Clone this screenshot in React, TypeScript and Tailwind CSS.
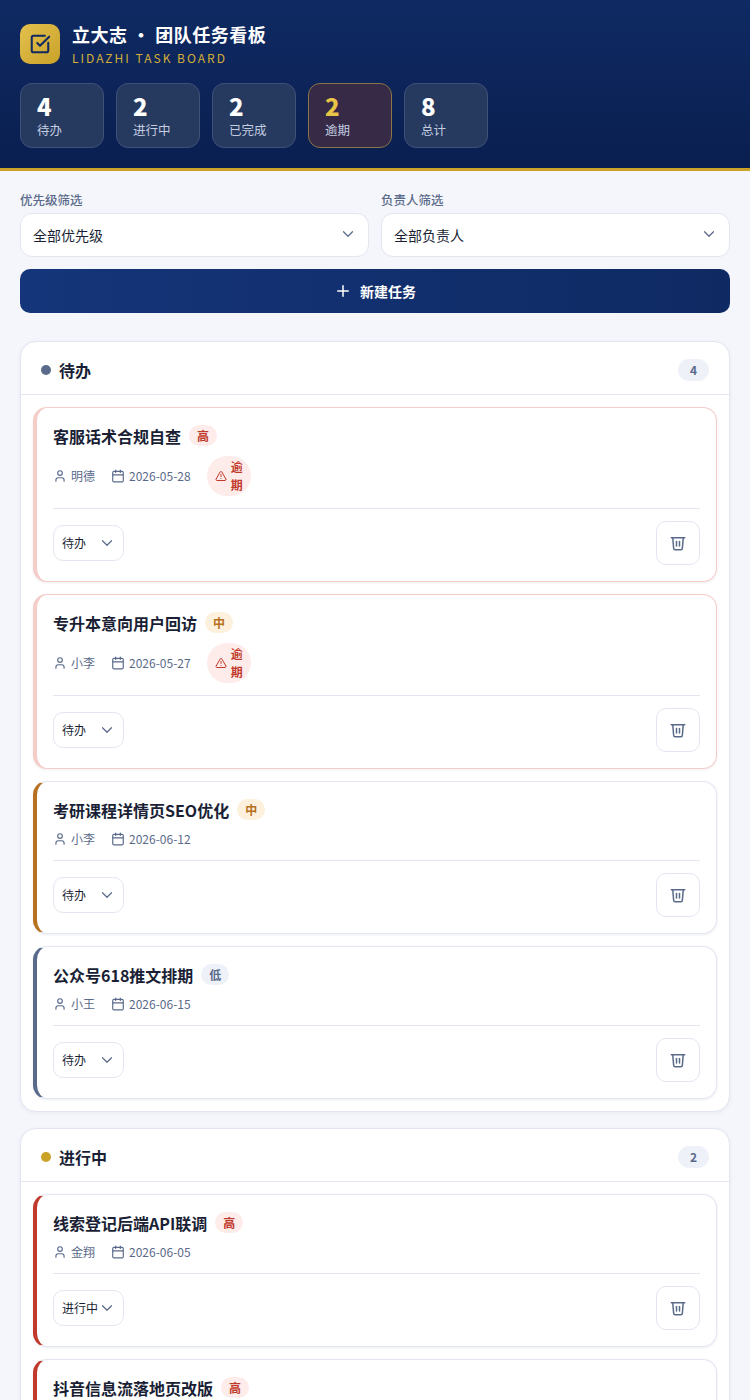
import React from "react";
import {
  Calendar,
  ChevronDown,
  Plus,
  SquareCheckBig,
  TriangleAlert,
  User,
} from "lucide-react";

type Priority = "高" | "中" | "低";

interface Task {
  title: string;
  priority: Priority;
  owner: string;
  date: string;
  overdue?: boolean;
  status: string;
}

const todoTasks: Task[] = [
  { title: "客服话术合规自查", priority: "高", owner: "明德", date: "2026-05-28", overdue: true, status: "待办" },
  { title: "专升本意向用户回访", priority: "中", owner: "小李", date: "2026-05-27", overdue: true, status: "待办" },
  { title: "考研课程详情页SEO优化", priority: "中", owner: "小李", date: "2026-06-12", status: "待办" },
  { title: "公众号618推文排期", priority: "低", owner: "小王", date: "2026-06-15", status: "待办" },
];

const doingTasks: Task[] = [
  { title: "线索登记后端API联调", priority: "高", owner: "金翔", date: "2026-06-05", status: "进行中" },
  { title: "抖音信息流落地页改版", priority: "高", owner: "小王", date: "2026-06-08", status: "进行中" },
];

const stats = [
  { value: 4, label: "待办" },
  { value: 2, label: "进行中" },
  { value: 2, label: "已完成" },
  { value: 2, label: "逾期", alert: true },
  { value: 8, label: "总计" },
];

// Trash can without handle, as in the delete button
const TrashIcon = () => (
  <svg
    width="18"
    height="18"
    viewBox="0 0 24 24"
    fill="none"
    stroke="currentColor"
    strokeWidth="2"
    strokeLinecap="round"
    strokeLinejoin="round"
  >
    <path d="M3 5h18" />
    <path d="M5 5l1.2 14a2 2 0 0 0 2 2h7.6a2 2 0 0 0 2-2L19 5" />
    <path d="M10 10v6" />
    <path d="M14 10v6" />
  </svg>
);

const PriorityBadge: React.FC<{ priority: Priority }> = ({ priority }) => {
  if (priority === "高") {
    return (
      <span className="-mt-1 rounded-full bg-[#fdecea] px-2 text-xs leading-[21px] font-bold text-[#c0392b]">
        高
      </span>
    );
  }
  if (priority === "中") {
    return (
      <span className="-mt-1 rounded-full bg-[#fdf0dc] px-2 text-xs leading-[21px] font-bold text-[#b7701f]">
        中
      </span>
    );
  }
  return (
    <span className="-mt-1 rounded-full bg-[#eef1f8] px-2 text-xs leading-[21px] font-bold text-[#5a6a8a]">
      低
    </span>
  );
};

const FilterSelect: React.FC<{ label: string; value: string }> = ({ label, value }) => (
  <div className="min-w-0 flex-1">
    <div className="mb-1 text-[12.5px] leading-[18px] font-medium text-[#5a6a8a]">{label}</div>
    <div className="relative">
      <select className="h-11 w-full appearance-none rounded-xl border border-[#e2e6f0] bg-white pr-8 pl-3 text-sm text-[#1a1f36]">
        <option>{value}</option>
      </select>
      <ChevronDown
        size={18}
        strokeWidth={1.6}
        className="pointer-events-none absolute top-[12px] right-3 text-[#5a6a8a]"
      />
    </div>
  </div>
);

const TaskCard: React.FC<{ task: Task; accent: string; danger?: boolean }> = ({ task, accent, danger }) => (
  <div
    className={`rounded-[14px] border border-l-4 bg-white p-4 shadow-[0_1px_3px_rgba(10,31,68,0.08)] ${accent} ${
      danger ? "border-[#f5cdc8]" : "border-[#e2e6f0]"
    }`}
  >
    <div className="flex h-[26px] items-center gap-2">
      <h3 className="-mt-[2px] text-base leading-[24px] font-bold text-[#1a1f36]">{task.title}</h3>
      <PriorityBadge priority={task.priority} />
    </div>
    <div className="mt-1.5 flex items-center gap-4 text-xs leading-[18px] text-[#5a6a8a]">
      <span className="flex items-center gap-1">
        <User size={14} />
        {task.owner}
      </span>
      <span className="flex items-center gap-1">
        <Calendar size={14} />
        {task.date}
      </span>
      {task.overdue && (
        <span className="flex items-center gap-1 rounded-full bg-[#fdecea] px-2 py-0.5 font-semibold text-[#c0392b]">
          <TriangleAlert size={12} />
          <span className="w-3">逾期</span>
        </span>
      )}
    </div>
    <div className="mt-3 flex items-center justify-between border-t border-[#e2e6f0] pt-3">
      <div className="relative">
        <select className="h-9 w-[71px] appearance-none rounded-[10px] border border-[#e2e6f0] bg-white pl-2 text-xs text-[#1a1f36]">
          <option>{task.status}</option>
        </select>
        <ChevronDown
          size={18}
          strokeWidth={1.6}
          className="pointer-events-none absolute top-[9px] right-[8px] text-[#5a6a8a]"
        />
      </div>
      <button className="flex h-11 w-11 items-center justify-center rounded-[10px] border border-[#e2e6f0] bg-white text-[#5a6a8a]">
        <TrashIcon />
      </button>
    </div>
  </div>
);

const Column: React.FC<{
  title: string;
  dot: string;
  tasks: Task[];
  accentFor: (task: Task) => string;
}> = ({ title, dot, tasks, accentFor }) => (
  <section className="overflow-hidden rounded-2xl border border-[#e2e6f0] bg-white shadow-[0_1px_4px_rgba(10,31,68,0.06)]">
    <div className="flex h-[53px] items-center justify-between border-b border-[#e2e6f0] px-5 pt-[3px]">
      <div className="flex items-center gap-2">
        <span className={`h-2.5 w-2.5 rounded-full ${dot}`} />
        <h2 className="text-base font-bold text-[#1a1f36]">{title}</h2>
      </div>
      <span className="rounded-full bg-[#eef1f8] px-3 text-xs leading-[22px] font-semibold text-[#5a6a8a]">
        {tasks.length}
      </span>
    </div>
    <div className="flex flex-col gap-3 p-3">
      {tasks.map((task) => (
        <TaskCard key={task.title} task={task} accent={accentFor(task)} danger={task.overdue} />
      ))}
    </div>
  </section>
);

const accentForTask = (task: Task) => {
  if (task.overdue) return "border-l-[#f5cdc8]";
  if (task.priority === "高") return "border-l-[#c0392b]";
  if (task.priority === "中") return "border-l-[#b7701f]";
  return "border-l-[#5a6a8a]";
};

export default function App() {
  return (
    <div className="min-h-screen bg-[#f4f6fb] font-['Noto_Sans_CJK_SC','Noto_Sans',sans-serif]">
      {/* Header */}
      <header className="border-b-[3px] border-[#c9a227] bg-gradient-to-b from-[#0f2a63] to-[#0a1f50] px-5 pt-6 pb-5">
        <div className="flex items-start gap-3">
          <div className="flex h-10 w-10 items-center justify-center rounded-[10px] bg-gradient-to-br from-[#e3c04d] to-[#c9a227] text-[#0f2a63]">
            <SquareCheckBig size={22} strokeWidth={2.2} />
          </div>
          <div>
            <h1 className="text-lg leading-[20px] font-bold tracking-[0.5px] text-white">立大志 · 团队任务看板</h1>
            <p className="mt-[5px] text-xs leading-[18px] tracking-[2px] text-[#d4af37]">LIDAZHI TASK BOARD</p>
          </div>
        </div>
        <div className="mt-4 flex gap-3">
          {stats.map((stat) => (
            <div
              key={stat.label}
              className={`h-[65px] w-[84px] rounded-xl border px-4 pt-[7px] ${
                stat.alert
                  ? "border-[#8a7545] bg-[#372a47]"
                  : "border-[#3f517a] bg-[#26395f]"
              }`}
            >
              <div
                className={`text-2xl leading-[30px] font-black ${
                  stat.alert ? "text-[#e8c547]" : "text-white"
                }`}
              >
                {stat.value}
              </div>
              <div className="text-[12.5px] leading-[17px] text-[#c4cde0]">{stat.label}</div>
            </div>
          ))}
        </div>
      </header>

      {/* Filters */}
      <div className="px-5 pt-5">
        <div className="flex gap-3">
          <FilterSelect label="优先级筛选" value="全部优先级" />
          <FilterSelect label="负责人筛选" value="全部负责人" />
        </div>
        <button className="mt-3 flex h-11 w-full items-center justify-center gap-2 rounded-[10px] bg-gradient-to-r from-[#15357a] to-[#0f2a63] text-sm font-semibold text-white">
          <Plus size={18} />
          新建任务
        </button>
      </div>

      {/* Board */}
      <div className="flex flex-col gap-4 px-5 pt-7 pb-6">
        <Column title="待办" dot="bg-[#5a6a8a]" tasks={todoTasks} accentFor={accentForTask} />
        <Column title="进行中" dot="bg-[#c9a227]" tasks={doingTasks} accentFor={accentForTask} />
      </div>
    </div>
  );
}
